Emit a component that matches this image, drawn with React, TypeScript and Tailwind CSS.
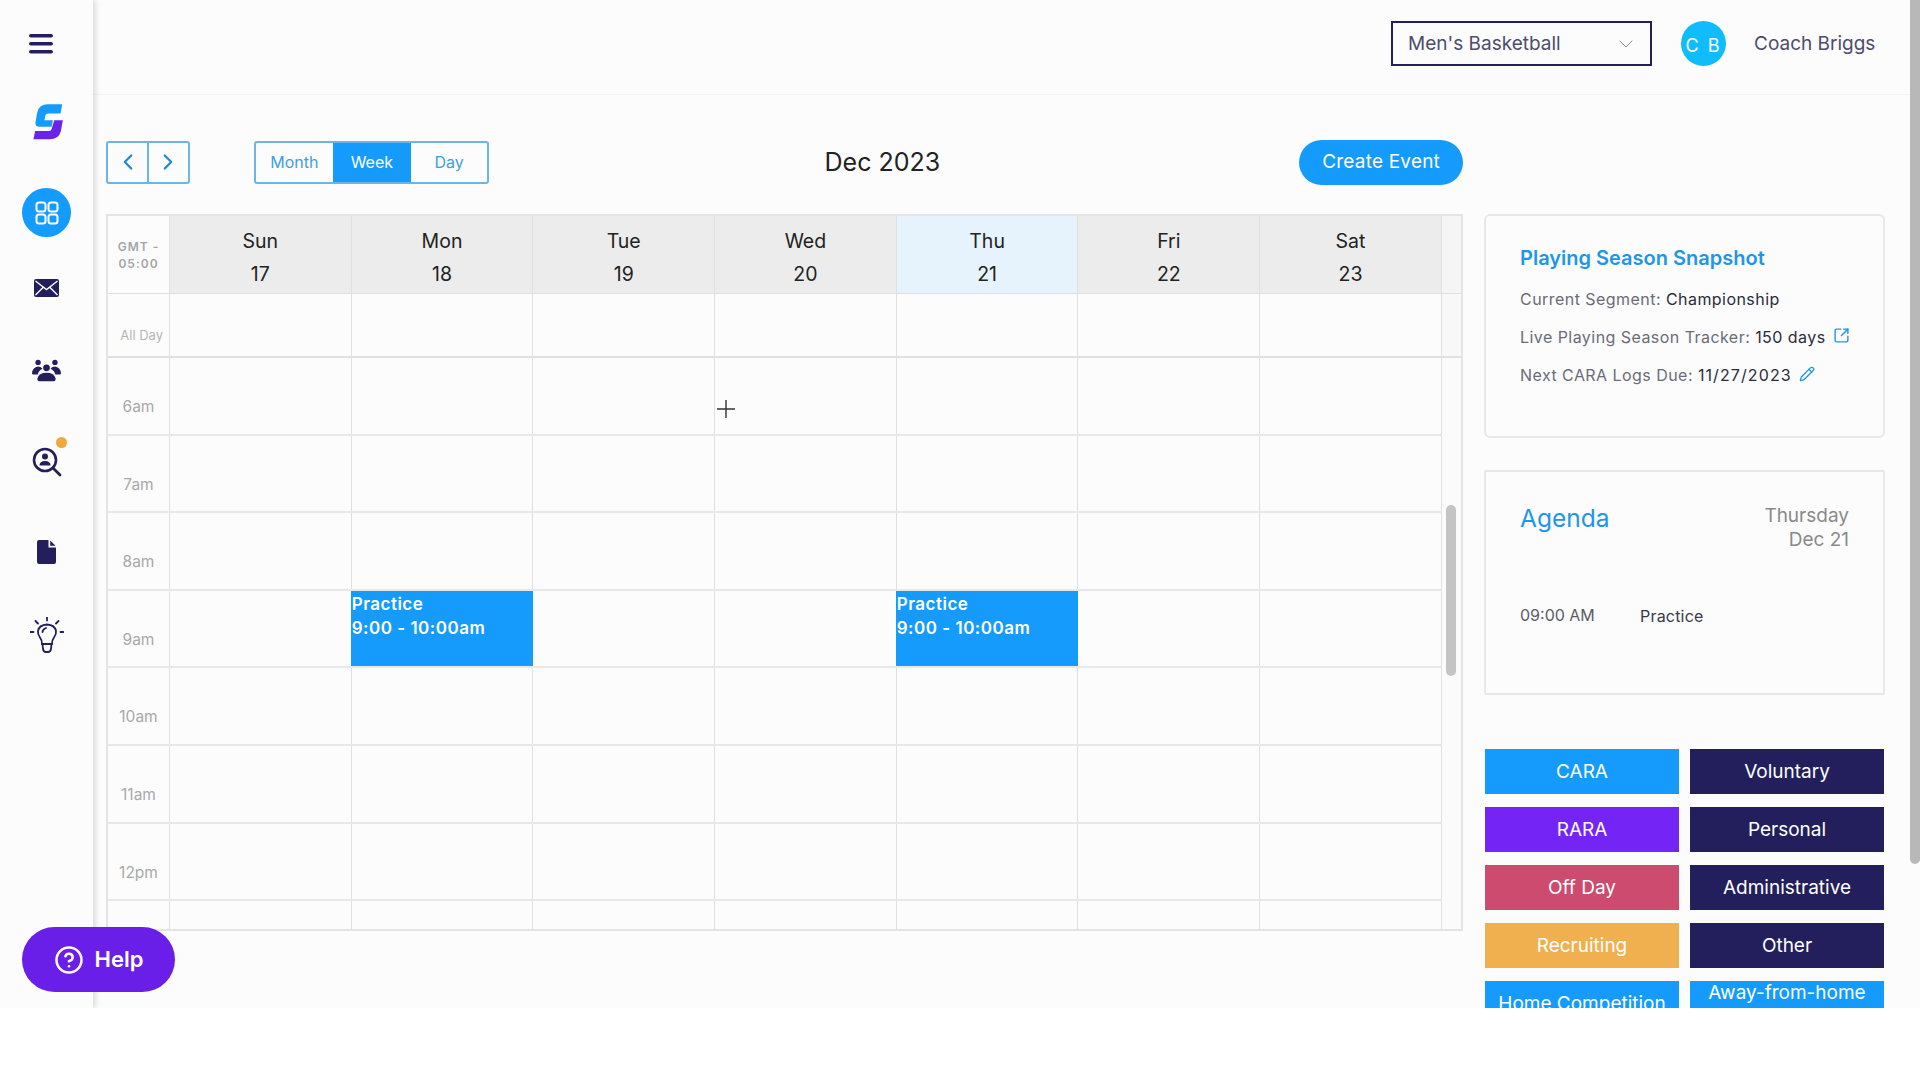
import React from 'react'
import { ChevronLeft, ChevronRight, ChevronDown, CircleHelp, SquareArrowOutUpRight, Pencil } from 'lucide-react'

const days = [
    { name: 'Sun', date: 17 },
    { name: 'Mon', date: 18 },
    { name: 'Tue', date: 19 },
    { name: 'Wed', date: 20 },
    { name: 'Thu', date: 21 },
    { name: 'Fri', date: 22 },
    { name: 'Sat', date: 23 },
]

const hours = ['6am', '7am', '8am', '9am', '10am', '11am', '12pm', '']

const legend = [
    { label: 'CARA', color: 'bg-[#149bfc]' },
    { label: 'Voluntary', color: 'bg-[#231f5c]' },
    { label: 'RARA', color: 'bg-[#7425f5]' },
    { label: 'Personal', color: 'bg-[#231f5c]' },
    { label: 'Off Day', color: 'bg-[#cc4b6e]' },
    { label: 'Administrative', color: 'bg-[#231f5c]' },
    { label: 'Recruiting', color: 'bg-[#f0b050]' },
    { label: 'Other', color: 'bg-[#231f5c]' },
]

function Sidebar() {
    return (
        <div className="w-[93px] shrink-0 h-full flex flex-col items-center bg-[#fcfcfc] shadow-[3px_0_5px_rgba(0,0,0,0.12)] z-10">
            <svg className="mt-[34px] -ml-[11px]" width="24" height="20" viewBox="0 0 24 20" fill="#231f5c">
                <rect x="0" y="0" width="24" height="3.6" rx="1.8" />
                <rect x="0" y="8" width="24" height="3.6" rx="1.8" />
                <rect x="0" y="16" width="24" height="3.6" rx="1.8" />
            </svg>
            {/* logo */}
            <svg className="mt-[49px] ml-[3px]" width="30" height="37" viewBox="20 20 90 112">
                <path d="M108 24 L62 24 Q36 26 32 50 L27 78 Q25 92 40 92 L76 92 L80 72 L54 72 L57 58 Q58 52 66 52 L103 52 Z" fill="#149bfc" />
                <path d="M84 72 L110 72 L104 105 Q98 130 70 130 L21 130 L26 105 L68 105 Q75 105 77 96 Z" fill="#6a23ea" />
            </svg>
            <div className="mt-[48px] w-[49px] h-[49px] rounded-full bg-[#149bfc] flex items-center justify-center">
                <svg width="24" height="24" viewBox="0 0 24 24" fill="none" stroke="#ffffff" strokeWidth="2">
                    <rect x="1.5" y="1.5" width="9" height="9" rx="2.5" />
                    <rect x="13.5" y="1.5" width="9" height="9" rx="2.5" />
                    <rect x="1.5" y="13.5" width="9" height="9" rx="2.5" />
                    <rect x="13.5" y="13.5" width="9" height="9" rx="2.5" />
                </svg>
            </div>
            <svg className="mt-[42px]" width="25" height="18" viewBox="0 0 25 18">
                <rect width="25" height="18" rx="2" fill="#231f5c" />
                <path d="M1.5 2 L12.5 10.5 L23.5 2 M1.5 16 L9 8.5 M23.5 16 L16 8.5" stroke="#ffffff" strokeWidth="1.4" fill="none" />
            </svg>
            {/* team */}
            <svg className="mt-[62px]" width="29" height="23" viewBox="24 26 86 68" fill="#231f5c">
                <circle cx="42" cy="36" r="8" />
                <circle cx="92" cy="36" r="8" />
                <circle cx="67" cy="52" r="10" />
                <path d="M24 68 Q26 50 42 48 Q50 48 55 55 Q44 60 41 72 L28 72 Q24 72 24 68 Z" />
                <path d="M110 68 Q108 50 92 48 Q84 48 79 55 Q90 60 93 72 L106 72 Q110 72 110 68 Z" />
                <path d="M44 92 Q39 91 40 84 Q44 67 67 67 Q90 67 94 84 Q95 91 90 92 Z" />
            </svg>
            {/* search person */}
            <div className="relative mt-[65px] w-[30px] h-[30px]">
                <svg width="30" height="30" viewBox="0 0 30 30" fill="none">
                    <circle cx="13" cy="13" r="11" stroke="#231f5c" strokeWidth="2.6" />
                    <path d="M21 21 L28 28" stroke="#231f5c" strokeWidth="2.8" strokeLinecap="round" />
                    <circle cx="13" cy="9.5" r="3" fill="#231f5c" />
                    <path d="M7.5 18.5 Q7.5 14 13 14 Q18.5 14 18.5 18.5 Z" fill="#231f5c" />
                </svg>
                <div className="absolute -top-[10px] right-[-5px] w-[11px] h-[11px] rounded-full bg-[#f0a83c]" />
            </div>
            <svg className="mt-[63px]" width="19" height="24" viewBox="0 0 19 24">
                <path d="M2 0 L11.5 0 L11.5 7.5 L19 7.5 L19 22 Q19 24 17 24 L2 24 Q0 24 0 22 L0 2 Q0 0 2 0 Z" fill="#231f5c" />
                <path d="M13.2 0.4 L18.6 5.8 L13.2 5.8 Z" fill="#231f5c" />
            </svg>
            {/* bulb */}
            <svg className="mt-[53px]" width="34" height="36" viewBox="0 0 34 36" fill="none" stroke="#231f5c" strokeWidth="1.8" strokeLinecap="round">
                <path d="M12 27 Q12 23 10 20.5 Q7.5 17.5 8 14 Q9 8 17 7.5 Q25 8 26 14 Q26.5 17.5 24 20.5 Q22 23 22 27 Z" />
                <path d="M12.5 27 L13 32 Q13.5 35 16 35 L18 35 Q20.5 35 21 32 L21.5 27" />
                <path d="M12.5 15 Q13 12 16 11" />
                <path d="M17 0.5 L17 3.5 M5.5 4 L8 6.5 M28.5 4 L26 6.5 M0.5 15 L3.5 15 M30.5 15 L33.5 15" />
            </svg>
        </div>
    )
}

function TopBar() {
    return (
        <div className="h-[95px] shrink-0 flex items-center border-b border-[#f3f3f3] pl-[1298px]">
            <div className="w-[261px] h-[45px] mb-[7px] border-2 border-[#231f5c] flex items-center justify-between pl-[15px] pr-[12px] text-[19px] text-[#4d4d6b]">
                <span className="pt-[2px]">Men's Basketball</span>
                <ChevronDown size={24} strokeWidth={1} className="text-[#8a8a8a]" />
            </div>
            <div className="ml-[29px] mb-[7px] w-[45px] h-[45px] rounded-full bg-[#10bcfb] text-white flex items-center justify-center text-[18px] pt-[3px] tracking-[2px]">C B</div>
            <div className="ml-[28px] mb-[6px] text-[19px] text-[#4d4d6b]">Coach Briggs</div>
        </div>
    )
}

function Toolbar() {
    return (
        <div className="flex items-center h-[44px]">
            <div className="flex w-[84px] h-[43px] border-2 border-[#6cb4ea] rounded-[3px] text-[#1b87d8]">
                <div className="w-[41px] flex items-center justify-center border-r-2 border-[#6cb4ea]"><ChevronLeft size={26} strokeWidth={2} /></div>
                <div className="flex-1 flex items-center justify-center"><ChevronRight size={26} strokeWidth={2} /></div>
            </div>
            <div className="ml-[64px] flex w-[236px] h-[43px] border-2 border-[#6cb4ea] rounded-[3px] text-[16px] text-[#3c9fe6] overflow-hidden">
                <div className="w-[77px] flex items-center justify-center">Month</div>
                <div className="w-[78px] flex items-center justify-center bg-[#149bfc] text-white">Week</div>
                <div className="flex-1 flex items-center justify-center">Day</div>
            </div>
            <div className="ml-[335px] w-[116px] whitespace-nowrap text-center text-[25px] text-[#222222] pt-[1px]">Dec 2023</div>
            <button className="ml-[359px] w-[164px] h-[45px] rounded-full bg-[#149bfc] text-white text-[19px] tracking-[0.2px]">Create Event</button>
        </div>
    )
}

function EventBlock() {
    return (
        <div className="h-[75px] -mx-[1px] bg-[#149bfc] text-white text-[17px] font-semibold leading-[24px] tracking-[0.5px] pt-[1px] pl-[1px]">
            <div>Practice</div>
            <div>9:00 - 10:00am</div>
        </div>
    )
}

function Calendar() {
    return (
        <div className="relative mt-[30px] w-[1357px] h-[717px] border-2 border-[#e4e4e4] overflow-hidden flex flex-col">
            {/* header */}
            <div className="flex h-[78px] shrink-0 border-b border-[#e0e0e0]">
                <div className="w-[62px] shrink-0 border-r border-[#e0e0e0] flex items-center justify-center text-center text-[12px] leading-[17px] font-semibold tracking-[1px] text-[#a5a5a5]">GMT -<br />05:00</div>
                {days.map((d) => (
                    <div key={d.name} className={`w-[181.7px] shrink-0 border-r border-[#e0e0e0] flex flex-col items-center justify-center pt-[6px] text-[19.5px] leading-[33px] text-[#222222] ${d.date === 21 ? 'bg-[#e6f3fc]' : 'bg-[#ececec]'}`}>
                        <span>{d.name}</span>
                        <span>{d.date}</span>
                    </div>
                ))}
                <div className="flex-1 bg-[#f5f5f5]" />
            </div>
            {/* all day row */}
            <div className="flex h-[64px] shrink-0 border-b-2 border-[#e0e0e0]">
                <div className="w-[62px] shrink-0 border-r border-[#e0e0e0] text-[13px] text-[#b5b5b5] text-right pr-[6px] pt-[32px]">All Day</div>
                {days.map((d) => (
                    <div key={d.name} className="w-[181.7px] shrink-0 border-r border-[#e0e0e0]" />
                ))}
                <div className="flex-1 bg-[#f8f8f8]" />
            </div>
            {/* hours */}
            <div className="flex flex-1 min-h-0">
                <div className="w-[1333.9px] shrink-0">
                    {hours.map((h) => (
                        <div key={h} className="flex h-[77.6px] border-b-2 border-[#e8e8e8]">
                            <div className="w-[62px] shrink-0 border-r border-[#e0e0e0] text-[15.5px] text-[#a9a9a9] text-center pt-[37px]">{h}</div>
                            {days.map((d) => (
                                <div key={d.name} className="w-[181.7px] shrink-0 border-r border-[#e0e0e0]">
                                    {h === '9am' && (d.date === 18 || d.date === 21) && <EventBlock />}
                                </div>
                            ))}
                        </div>
                    ))}
                </div>
                <div className="flex-1 pt-[147px] pl-[4px] bg-[#fbfbfb]">
                    <div className="w-[10px] h-[171px] rounded-full bg-[#c4c4c4]" />
                </div>
            </div>
            {/* mouse cursor */}
            <svg className="absolute left-[608px] top-[183px]" width="20" height="20" viewBox="0 0 20 20" stroke="#333333" strokeWidth="1.4">
                <path d="M10 1 L10 19 M1 10 L19 10" />
            </svg>
        </div>
    )
}

function RightPanel() {
    return (
        <div className="w-[401px] shrink-0 ml-[21px] mt-[119px]">
            <div className="h-[224px] border-2 border-[#e8e8e8] rounded-[6px] pl-[34px] pt-[30px]">
                <div className="text-[20px] leading-[24px] font-semibold text-[#2196e8]">Playing Season Snapshot</div>
                <div className="mt-[17px] text-[16px] leading-[24px] text-[#6b6b78] tracking-[0.45px]">Current Segment: <span className="text-[#2b2b3a]">Championship</span></div>
                <div className="mt-[14px] flex items-center text-[16px] leading-[24px] text-[#6b6b78] tracking-[0.45px]">
                    Live Playing Season Tracker:&nbsp;<span className="text-[#2b2b3a]">150 days</span>
                    <SquareArrowOutUpRight size={17} className="ml-[7px] mb-[3px] text-[#2196e8]" />
                </div>
                <div className="mt-[14px] flex items-center text-[16px] leading-[24px] text-[#6b6b78] tracking-[0.45px]">
                    Next CARA Logs Due:&nbsp;<span className="text-[#2b2b3a] tracking-[1.1px]">11/27/2023</span>
                    <Pencil size={16} className="ml-[7px] mb-[3px] text-[#2196e8]" />
                </div>
            </div>
            <div className="mt-[32px] h-[225px] border-2 border-[#e8e8e8] rounded-[2px] px-[34px] pt-[30px]">
                <div className="flex justify-between">
                    <div className="text-[24.5px] leading-[34px] text-[#2196e8] -mt-[1px]">Agenda</div>
                    <div className="text-right text-[19px] leading-[24px] text-[#8a8a8a] pt-[2px]">Thursday<br />Dec 21</div>
                </div>
                <div className="mt-[50px] flex items-center text-[16px] leading-[24px]">
                    <div className="w-[120px] text-[#5b5b68]">09:00 AM</div>
                    <div className="text-[#3a3a48] mt-[2px] tracking-[0.2px]">Practice</div>
                </div>
            </div>
            <div className="mt-[54px] grid grid-cols-[194px_194px] gap-x-[11px] gap-y-[13px] pl-[1px] text-[19px] text-white">
                {legend.map((b) => (
                    <div key={b.label} className={`h-[45px] pt-[2px] flex items-center justify-center ${b.color}`}>{b.label}</div>
                ))}
                <div className="h-[45px] pt-[2px] flex items-center justify-center bg-[#149bfc] whitespace-nowrap">Home Competition</div>
                <div className="h-[45px] text-center leading-[24px] bg-[#149bfc]">Away-from-home Competition</div>
            </div>
        </div>
    )
}

export default function App() {
    return (
        <div className="relative w-[1920px] h-[1080px] bg-white overflow-hidden font-['Inter',sans-serif]">
            <div className="flex h-[1008px] overflow-hidden bg-[#fcfcfc]">
                <Sidebar />
                <div className="flex-1 min-w-0 flex flex-col">
                    <TopBar />
                    <div className="flex pl-[13px]">
                        <div className="w-[1357px] shrink-0 pt-[45px]">
                            <Toolbar />
                            <Calendar />
                        </div>
                        <RightPanel />
                    </div>
                </div>
                <div className="w-[10px] h-[864px] shrink-0 rounded-b-full bg-[#b8b8b8]" />
            </div>
            <button className="absolute left-[22px] top-[927px] w-[153px] h-[65px] rounded-full bg-[#6a1fe8] text-white flex items-center justify-center gap-[11px] text-[22px] font-semibold z-20">
                <CircleHelp size={30} strokeWidth={2} />
                <span>Help</span>
            </button>
        </div>
    )
}
